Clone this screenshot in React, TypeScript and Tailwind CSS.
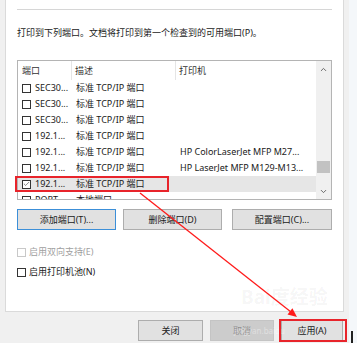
import { Check, ChevronDown, ChevronUp } from "lucide-react";

const FONT = "font-['Noto_Sans','Noto_Sans_CJK_SC',sans-serif]";

const ROWS = [
  { port: "SEC30...", desc: "标准 TCP/IP 端口", printer: "" },
  { port: "SEC30...", desc: "标准 TCP/IP 端口", printer: "" },
  { port: "SEC30...", desc: "标准 TCP/IP 端口", printer: "" },
  { port: "192.1...", desc: "标准 TCP/IP 端口", printer: "" },
  { port: "192.1...", desc: "标准 TCP/IP 端口", printer: "HP ColorLaserJet MFP M27..." },
  { port: "192.1...", desc: "标准 TCP/IP 端口", printer: "HP LaserJet MFP M129-M13..." },
  { port: "192.1...", desc: "标准 TCP/IP 端口", printer: "", checked: true },
  { port: "PORT...", desc: "本地端口", printer: "" },
];

function Box({ checked, disabled }: { checked?: boolean; disabled?: boolean }) {
  return (
    <span
      className={`w-[9px] h-[9px] shrink-0 border bg-white flex items-center justify-center ${
        disabled ? "border-[#c8c8c8]" : "border-[#333]"
      }`}
    >
      {checked && <Check size={8} strokeWidth={2} className="text-[#333]" />}
    </span>
  );
}

function Btn({ label, w, focus, disabled }: { label: string; w: string; focus?: boolean; disabled?: boolean }) {
  return (
    <div
      className={`${w} h-[21px] flex items-center justify-center text-[9px] border ${
        disabled
          ? "bg-[#cccccc] border-[#c4c4c4] text-[#8f8f8f]"
          : focus
          ? "bg-[#e1e1e1] border-[#3c8fd8] text-[#1a1a1a]"
          : "bg-[#e1e1e1] border-[#adadad] text-[#1a1a1a]"
      }`}
    >
      {label}
    </div>
  );
}

export default function App() {
  return (
    <div className={`relative w-[357px] h-[343px] overflow-hidden bg-[#f0f0f0] flex ${FONT} text-[#1a1a1a]`}>
      <div className="w-[349px] flex flex-col pl-[5px] pr-[5px]">
        {/* property page */}
        <div className="h-[312px] bg-white border-l border-r border-b border-[#dadada] pl-[11px] pr-[11px] flex flex-col">
          <div className="mt-[9px] h-px bg-[#d6d6d6]" />
          <p className="mt-[17px] text-[9px] leading-[12px] whitespace-nowrap">
            打印到下列端口。文档将打印到第一个检查到的可用端口(P)。
          </p>

          {/* port list */}
          <div className="mt-[21px] h-[140px] border border-[#b4b4b4] flex overflow-hidden">
            <div className="flex-1 flex flex-col">
              <div className="h-[19px] shrink-0 flex text-[9px] text-[#333]">
                <div className="w-[54px] pl-[4px] flex items-center border-r border-[#e5e5e5]">端口</div>
                <div className="w-[104px] pl-[3px] flex items-center border-r border-[#e5e5e5]">描述</div>
                <div className="flex-1 pl-[3px] flex items-center">打印机</div>
              </div>
              {ROWS.map((r, i) => (
                <div
                  key={i}
                  className={`h-[16px] shrink-0 flex items-center text-[9px] whitespace-nowrap ${
                    r.checked ? "bg-[#e6e6e6]" : ""
                  }`}
                >
                  <div className="w-[54px] pl-[4px] flex items-center gap-[4px]">
                    <Box checked={r.checked} />
                    <span>{r.port}</span>
                  </div>
                  <div className="w-[104px] pl-[4px]">{r.desc}</div>
                  <div className="flex-1 pl-[4px]">{r.printer}</div>
                </div>
              ))}
            </div>
            {/* scrollbar */}
            <div className="w-[15px] bg-[#f0f0f0] flex flex-col items-center">
              <div className="h-[16px] flex items-center justify-center">
                <ChevronUp size={9} strokeWidth={2.5} className="text-[#606060]" />
              </div>
              <div className="flex-1 w-full px-[1px]">
                <div className="mt-[84px] h-[12px] bg-[#c2c2c2]" />
              </div>
              <div className="h-[16px] flex items-center justify-center">
                <ChevronDown size={9} strokeWidth={2.5} className="text-[#606060]" />
              </div>
            </div>
          </div>

          <div className="mt-[9px] flex">
            <Btn label="添加端口(T)..." w="w-[99px]" focus />
            <div className="ml-[7px]">
              <Btn label="删除端口(D)" w="w-[99px]" />
            </div>
            <div className="ml-[10px]">
              <Btn label="配置端口(C)..." w="w-[100px]" />
            </div>
          </div>

          <div className="mt-[16px] h-[12px] flex items-center gap-[3px] text-[9px] text-[#a0a0a0]">
            <Box disabled />
            <span>启用双向支持(E)</span>
          </div>
          <div className="mt-[8px] h-[12px] flex items-center gap-[3px] text-[9px]">
            <Box />
            <span>启用打印机池(N)</span>
          </div>
        </div>

        {/* dialog buttons */}
        <div className="mt-[8px] flex justify-end gap-[7px] pr-[1px]">
          <Btn label="关闭" w="w-[65px]" />
          <Btn label="取消" w="w-[64px]" disabled />
          <Btn label="应用(A)" w="w-[62px]" />
        </div>
      </div>
      <div className="w-[8px] bg-[#f4f7fa]" />

      {/* watermark */}
      <div className="absolute left-[241px] top-[288px] text-[19px] font-bold leading-none text-black/[0.05] whitespace-nowrap pointer-events-none">
        Bai度经验
      </div>
      <div className="absolute left-[234px] top-[327px] text-[8px] leading-none text-white/40 whitespace-nowrap pointer-events-none">
        jingyan.baidu
      </div>

      {/* annotations */}
      <div className="absolute left-[15px] top-[176px] w-[154px] h-[16px] border-2 border-[#e8242b]" />
      <div className="absolute left-[279px] top-[319px] w-[68px] h-[23px] border-2 border-[#e8242b]" />
      <div className="absolute left-[351px] top-[331px] w-[2px] h-[12px] bg-[#222]" />
      <svg className="absolute left-0 top-0 pointer-events-none" width="357" height="343" viewBox="0 0 357 343">
        <line x1="140" y1="193" x2="291" y2="312" stroke="#ff1a1a" strokeWidth="1.3" />
        <polygon points="297,317 287.5,314.6 292.4,308.3" fill="#ff1a1a" />
      </svg>
    </div>
  );
}
